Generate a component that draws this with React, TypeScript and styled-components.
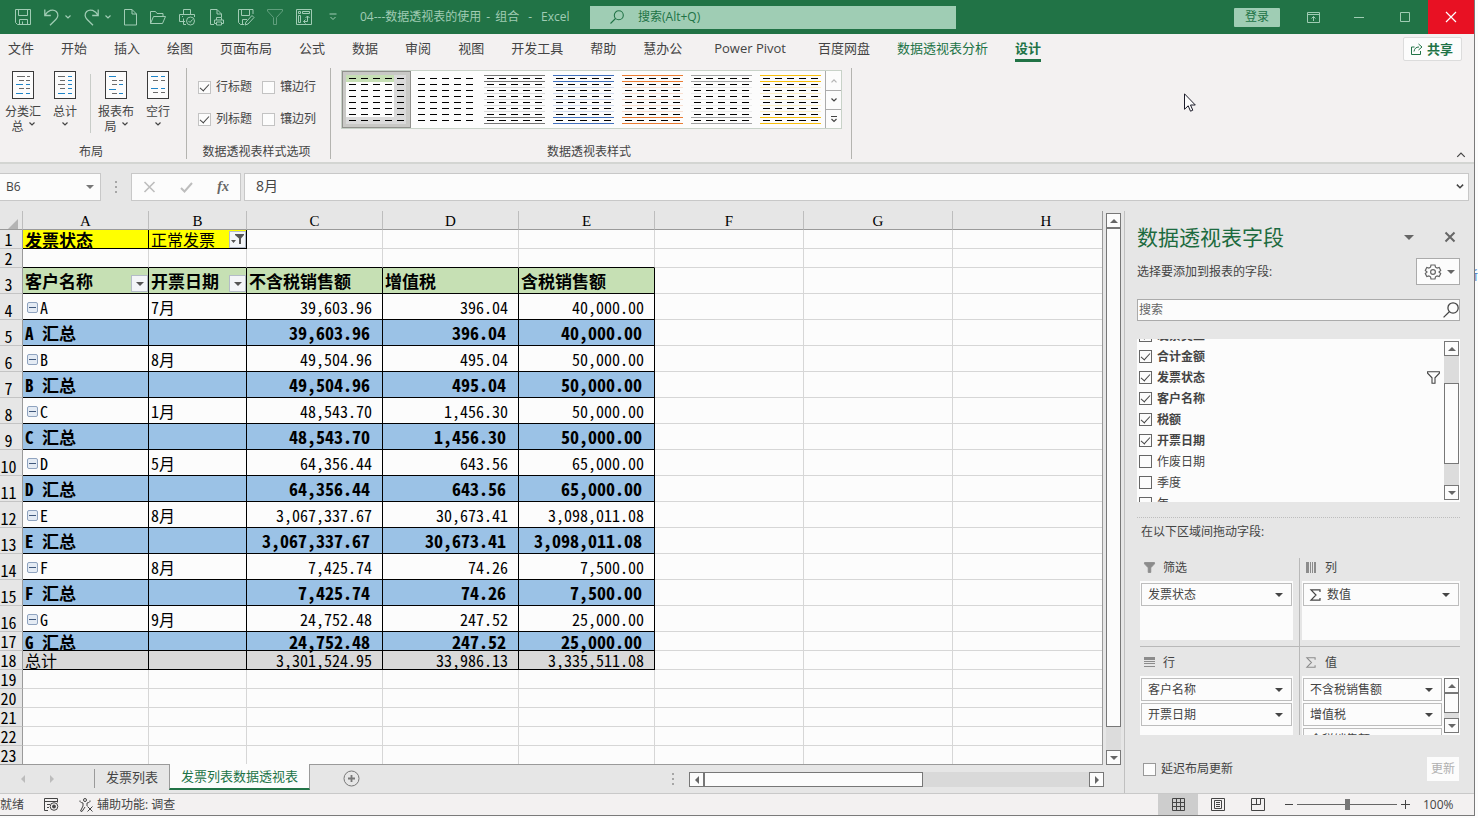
import React from "react";
import styled, { createGlobalStyle, css } from "styled-components";

const green = "#217346";
const ui = `"Open Sans", "Noto Sans CJK SC", sans-serif`;
const cellFont = `"Noto Sans CJK SC", sans-serif`;

const Global = createGlobalStyle`
  * { box-sizing: border-box; }
  body { margin: 0; background: #fcfcfc; font: 12px/16px ${ui}; color: #444; }
  button, input { font: inherit; color: inherit; margin: 0; padding: 0; border: 0; background: none; border-radius: 0; }
  button { cursor: default; white-space: nowrap; }
  input:focus, button:focus { outline: none; }
  svg { display: block; flex: none; }
`;

const Desktop = styled.div`
  display: flex;
  min-height: 100vh;
  align-items: flex-start;
  overflow: hidden;
`;
const Behind = styled.div`
  width: 3px;
  padding-top: 268px;
  overflow: hidden;
  color: #2f6fc4;
  direction: rtl;
`;
const Window = styled.div`
  flex: 1;
  min-width: 0;
  display: flex;
  flex-direction: column;
  border-right: 1px solid #7a7a7a;
  border-bottom: 1px solid #7a7a7a;
  background: #e6e6e6;
`;
const Icon = styled.svg`
  fill: none;
  stroke: currentColor;
  overflow: visible;
`;
const Muted = styled.span`
  width: 11px;
  color: #8c8c8c;
`;

/* title bar */
const TitleBar = styled.header`
  display: flex;
  align-items: center;
  height: 34px;
  background: ${green};
  color: #a0ccb4;
`;
const Quick = styled.div`
  display: flex;
  align-items: center;
  gap: 13px;
  padding-left: 15px;
  width: 360px;
`;
const QuickButton = styled.button<{ $w?: number; $dim?: boolean }>`
  display: flex;
  align-items: center;
  justify-content: space-between;
  width: ${(p) => p.$w ?? 16}px;
  opacity: ${(p) => (p.$dim ? 0.5 : 1)};
`;
const DocTitle = styled.div`
  display: flex;
  gap: 5px;
  width: 230px;
  white-space: nowrap;
`;
const AppDash = styled.span`
  margin: 0 4px;
`;
const TitleSearch = styled.label`
  display: flex;
  align-items: center;
  gap: 14px;
  width: 366px;
  height: 23px;
  padding-left: 20px;
  background: #9fcdb4;
  color: ${green};
  input { flex: 1; min-width: 0; }
  input::placeholder { color: ${green}; opacity: 1; }
`;
const WindowControls = styled.div`
  display: flex;
  align-items: center;
  align-self: stretch;
  margin-left: auto;
`;
const SignIn = styled.button`
  width: 46px;
  height: 19px;
  margin-right: 10px;
  background: #9fcdb4;
  color: ${green};
  border-radius: 1px;
`;
const ControlButton = styled.button<{ $close?: boolean }>`
  display: grid;
  place-items: center;
  align-self: stretch;
  width: 46px;
  ${(p) => p.$close && css`background: #e81123; color: #fff;`}
`;

/* ribbon */
const Tabs = styled.nav`
  display: flex;
  align-items: flex-start;
  gap: 27px;
  height: 32px;
  padding: 3px 12px 0 8px;
  background: #f3f1f1;
  font-size: 13px;
  line-height: 22px;
`;
const Tab = styled.button<{ $green?: boolean; $active?: boolean; $wide?: boolean }>`
  height: 25px;
  padding: ${(p) => (p.$wide ? "0 5px" : "0")};
  color: ${(p) => (p.$green || p.$active ? green : "#444")};
  font-weight: ${(p) => (p.$active ? 700 : 400)};
  border-bottom: 3px solid ${(p) => (p.$active ? green : "transparent")};
`;
const Share = styled.button`
  display: flex;
  align-items: center;
  gap: 4px;
  height: 24px;
  margin-left: auto;
  padding: 0 8px 0 7px;
  background: #fcfcfc;
  border: 1px solid #dcdcdc;
  border-radius: 2px;
  color: ${green};
  font-weight: 700;
  line-height: 18px;
`;
const Ribbon = styled.section`
  display: flex;
  align-items: flex-start;
  height: 98px;
  padding-top: 2px;
  background: #f3f1f1;
  border-bottom: 2px solid #d3d5d2;
`;
const Group = styled.div<{ $w: number }>`
  display: flex;
  flex-direction: column;
  justify-content: space-between;
  width: ${(p) => p.$w}px;
  height: 91px;
  border-right: 1px solid #b4b4b0;
`;
const Caption = styled.div`
  text-align: center;
  line-height: 14px;
  padding-right: 4px;
`;
const BigButtons = styled.div`
  display: flex;
  padding: 3px 0 0 2px;
`;
const BigButton = styled.button`
  display: flex;
  flex-direction: column;
  align-items: center;
  width: 42px;
  line-height: 15px;
  svg:first-child { margin-bottom: 5px; }
`;
const BigLine = styled.span`
  display: flex;
  align-items: center;
  gap: 5px;
  height: 15px;
`;
const Divider = styled.div`
  width: 1px;
  height: 59px;
  margin: 3px 4px 0;
  background: #c8ccc8;
`;
const Checks = styled.div`
  display: grid;
  grid-template-columns: 64px 64px;
  row-gap: 16px;
  padding: 11px 0 0 11px;
`;
const Check = styled.label<{ $bold?: boolean }>`
  display: flex;
  align-items: center;
  gap: 5px;
  white-space: nowrap;
  font-weight: ${(p) => (p.$bold ? 700 : 400)};
`;
const Box = styled.input<{ $line?: string }>`
  appearance: none;
  display: grid;
  place-items: center;
  width: 13px;
  height: 13px;
  flex: none;
  background: #fcfcfc;
  border: 1px solid ${(p) => p.$line ?? "#c3c3c3"};
  &:checked::after {
    content: "";
    width: 4px;
    height: 8px;
    margin-top: -2px;
    border: solid #444;
    border-width: 0 1px 1px 0;
    transform: rotate(42deg);
  }
`;
const Gallery = styled.div`
  display: flex;
  height: 59px;
  margin: 2px 9px 0 10px;
  background: #fcfcfc;
  border: 1px solid #c8d2c8;
`;
const StyleButton = styled.button<{ $on?: boolean }>`
  width: 69px;
  height: 57px;
  ${(p) => p.$on && css`background: #c9c9c6; box-shadow: inset 0 0 0 1px #90908c;`}
`;
const GalleryScroll = styled.div`
  display: grid;
  flex: 1;
  grid-template-rows: 20px 19px 18px;
  button { display: grid; place-items: center; border: 1px solid #ababab; border-width: 0 0 1px 1px; }
  button:disabled { color: #b4b4b4; }
  button:last-child { border-bottom: 0; }
`;
const Collapse = styled.button`
  margin: 84px 8px 0 auto;
`;

/* formula bar */
const FormulaBar = styled.section`
  display: flex;
  align-items: flex-start;
  height: 47px;
  padding: 9px 5px 0 0;
`;
const Field = styled.div<{ $w?: number }>`
  display: flex;
  align-items: center;
  height: 28px;
  ${(p) => (p.$w ? `width: ${p.$w}px;` : "flex: 1; min-width: 0;")}
  background: #fcfcfc;
  border: 1px solid #c8c8c8;
  input { flex: 1; min-width: 0; }
`;
const NameField = styled(Field)`
  border-left: 0;
  padding: 0 6px;
  button { color: #777; }
`;
const FormulaButtons = styled(Field)`
  justify-content: space-between;
  padding: 0 11px;
  margin-right: 3px;
`;
const FunctionButton = styled.button`
  font: italic 700 14px "Liberation Serif", serif;
  color: #666;
`;
const FormulaField = styled(Field)`
  padding: 0 4px 2px 11px;
  font-size: 14px;
`;
const Grip = styled.div<{ $w: number }>`
  display: grid;
  place-items: center;
  width: ${(p) => p.$w}px;
  height: 28px;
  color: #a6a6a6;
`;

/* worksheet */
const Body = styled.main`
  display: flex;
  min-height: 582px;
`;
const SheetSide = styled.section`
  flex: 1;
  min-width: 0;
  display: flex;
  flex-direction: column;
`;
const SheetRow = styled.div`
  display: flex;
  height: 554px;
`;
const GridWrap = styled.div`
  flex: 1;
  min-width: 0;
  overflow: hidden;
  border-right: 1px solid #9a9a9a;
  border-bottom: 1px solid #9a9a9a;
`;
/* the last column runs on past the right edge of the view */
const Grid = styled.table`
  width: calc(100% + 38px);
  table-layout: fixed;
  border-collapse: separate;
  border-spacing: 0;
  background: #fcfcfc;
  color: #000;
  font: 16px/18px ${cellFont};
  font-feature-settings: "hwid" 1;
`;
const ColHead = styled.th`
  height: 19px;
  padding: 0;
  background: #e6e6e6;
  border-right: 1px solid #bdbdbd;
  border-bottom: 1px solid #9a9a9a;
  font-family: "Liberation Serif", serif;
  font-weight: 400;
  font-size: 15px;
  line-height: 16px;
  vertical-align: bottom;
`;
const Corner = styled.svg`
  margin-left: 8px;
`;
const RowHead = styled.th`
  vertical-align: bottom;
  background: #e6e6e6;
  font-weight: 400;
  padding: 0 5px 0 0;
  border-right: 1px solid #9a9a9a;
  border-bottom: 1px solid #c4c4c4;
`;
const Row = styled.tr<{ $h: number }>`
  height: ${(p) => p.$h}px;
`;
const Cell = styled.td<{ $bg?: string; $line?: boolean; $under?: boolean; $bold?: boolean; $num?: boolean }>`
  padding: ${(p) => (p.$num ? (p.$bold ? "0 12px 0 0" : "0 10px 0 0") : "0 0 0 2px")};
  background: ${(p) => p.$bg ?? "transparent"};
  border-right: 1px solid ${(p) => (p.$line ? "#000" : "#d6d6d6")};
  border-bottom: 1px solid ${(p) => (p.$line || p.$under ? "#000" : "#d6d6d6")};
  font-weight: ${(p) => (p.$bold ? 700 : 400)};
  font-size: ${(p) => (p.$bold ? (p.$num ? 18 : 17) : 16)}px;
  line-height: ${(p) => (p.$bold ? 17 : 18)}px;
  text-align: ${(p) => (p.$num ? "right" : "left")};
  white-space: nowrap;
`;
const CellFlex = styled.div<{ $end?: boolean }>`
  display: flex;
  align-items: center;
  justify-content: ${(p) => (p.$end ? "space-between" : "flex-start")};
  height: 18px;
`;
const FilterButton = styled.button<{ $low?: boolean }>`
  display: grid;
  place-items: center;
  width: 17px;
  height: 17px;
  margin-top: ${(p) => (p.$low ? 6 : 0)}px;
  background: #f3f5f8;
  border: 1px solid #b4bcc8;
  color: #555;
`;
const Toggle = styled.button`
  display: grid;
  place-items: center;
  width: 11px;
  height: 11px;
  margin: 2px 2px 0;
  background: #e4ebf4;
  border: 1px solid #8fa3bf;
  border-radius: 2px;
  color: #40587c;
`;

/* scroll bars */
const VScroll = styled.div<{ $m?: string }>`
  display: flex;
  flex-direction: column;
  width: 15px;
  margin: ${(p) => p.$m ?? "0"};
  background: #dcdcdc;
`;
const ScrollButton = styled.button`
  display: grid;
  place-items: center;
  width: 15px;
  height: 15px;
  flex: none;
  background: #fcfcfc;
  border: 1px solid #777;
  color: #666;
`;
const Thumb = styled.div<{ $h?: number; $w?: number; $top?: number }>`
  ${(p) => p.$h && `height: ${p.$h}px;`}
  ${(p) => p.$w && `width: ${p.$w}px;`}
  margin-top: ${(p) => p.$top ?? 0}px;
  background: #fcfcfc;
  border: 1px solid #777;
`;
const Spacer = styled.div`
  flex: 1;
`;
const SheetTabs = styled.div`
  display: flex;
  align-items: flex-start;
  height: 28px;
  padding-right: 20px;
  font-size: 13px;
`;
const TabArrows = styled.div`
  display: flex;
  gap: 25px;
  width: 95px;
  height: 19px;
  margin-top: 4px;
  padding: 6px 0 0 21px;
  border-right: 1px solid #9a9a9a;
  color: #bcbcbc;
`;
const SheetTab = styled.button<{ $active?: boolean }>`
  height: 24px;
  padding: 0 11px;
  ${(p) =>
    p.$active &&
    css`
      margin-top: -1px;
      height: 26px;
      background: #fcfcfc;
      color: ${green};
      border: solid #9a9a9a;
      border-width: 0 1px;
      border-bottom: 2px solid ${green};
    `}
`;
const AddSheet = styled.button`
  margin: 5px 0 0 33px;
`;
const HScroll = styled.div`
  display: flex;
  width: 415px;
  height: 15px;
  margin-top: 7px;
  background: #d9d9d9;
`;

/* field pane */
const Pane = styled.aside`
  width: 350px;
  flex: none;
  display: flex;
  flex-direction: column;
  border-left: 1px solid #c0c0c0;
  padding: 10px 14px 0 12px;
`;
const PaneHead = styled.div`
  display: flex;
  align-items: center;
  height: 32px;
  color: #666;
`;
const PaneTitle = styled.h2`
  flex: 1;
  margin: 0;
  font-size: 21px;
  font-weight: 400;
  line-height: 32px;
  color: #1d6b3f;
`;
const CloseButton = styled.button`
  margin: 0 5px 0 31px;
`;
const PaneSub = styled.div`
  display: flex;
  align-items: center;
  justify-content: space-between;
  height: 27px;
  margin-top: 5px;
`;
const Gear = styled.button`
  display: flex;
  align-items: center;
  justify-content: space-between;
  width: 44px;
  height: 27px;
  padding: 0 4px 0 8px;
  background: #fcfcfc;
  border: 1px solid #ababab;
  color: #666;
`;
const PaneSearch = styled.label`
  display: flex;
  align-items: center;
  height: 22px;
  margin: 14px 0 18px;
  padding-left: 1px;
  background: #fcfcfc;
  border: 1px solid #ababab;
  input { flex: 1; min-width: 0; }
  input::placeholder { color: #666; opacity: 1; }
`;
const FieldList = styled.div`
  display: flex;
  height: 163px;
  background: #fcfcfc;
  overflow: hidden;
`;
const Fields = styled.div`
  flex: 1;
  margin-top: -14px;
  padding-left: 2px;
`;
const FieldRow = styled.div`
  display: flex;
  align-items: center;
  justify-content: space-between;
  height: 21px;
  padding-right: 4px;
`;
const Hint = styled.div`
  margin-top: 15px;
  padding: 6px 0 0 4px;
  border-top: 1px dotted #bdbdbd;
`;
const Areas = styled.div`
  display: grid;
  grid-template-columns: 160px 1fr;
  margin: 18px 0 0 3px;
`;
const Area = styled.div<{ $right?: boolean; $top?: boolean }>`
  padding: ${(p) => (p.$top ? "0 0 6px" : "6px 0 0")};
  ${(p) => (p.$right ? "padding-left: 2px;" : "padding-right: 6px; border-right: 1px solid #b9b9b9;")}
  ${(p) => p.$top && "border-bottom: 1px solid #b9b9b9;"}
`;
const AreaHead = styled.div`
  display: flex;
  align-items: center;
  gap: 8px;
  height: 23px;
  padding: 0 0 4px 4px;
`;
const AreaBox = styled.div`
  display: flex;
  height: 59px;
  padding: 2px 1px 0;
  background: #fcfcfc;
  overflow: hidden;
`;
const Chips = styled.div`
  flex: 1;
  display: flex;
  flex-direction: column;
  gap: 2px;
`;
const Chip = styled.button`
  display: flex;
  align-items: center;
  gap: 6px;
  height: 23px;
  flex: none;
  padding: 0 8px 0 6px;
  border: 1px solid #bdbdbd;
  svg:last-child { margin-left: auto; }
`;
const PaneFoot = styled.div`
  display: flex;
  align-items: center;
  justify-content: space-between;
  margin: 22px 1px 12px 6px;
`;
const Update = styled.button`
  width: 32px;
  height: 24px;
  background: #fcfcfc;
  color: #b0b0b0;
`;

/* status bar */
const Status = styled.footer`
  display: flex;
  align-items: center;
  height: 22px;
  background: #f3f1f1;
  border-top: 1px solid #c9c9c9;
`;
const StatusItem = styled.div`
  display: flex;
  align-items: center;
  gap: 3px;
  margin-right: 20px;
`;
const ViewButton = styled.button<{ $on?: boolean }>`
  display: grid;
  place-items: center;
  width: 40px;
  height: 21px;
  background: ${(p) => (p.$on ? "#cdcdcd" : "transparent")};
`;
const Zoom = styled.div`
  display: flex;
  align-items: center;
  gap: 4px;
  margin: 0 19px 0 7px;
  output { margin-left: 9px; width: 32px; }
`;
const Range = styled.input`
  appearance: none;
  width: 100px;
  height: 12px;
  background: linear-gradient(#666, #666) center / 100% 1px no-repeat;
  &::-webkit-slider-thumb {
    appearance: none;
    width: 5px;
    height: 11px;
    background: #777;
  }
`;
const Pointer = styled.svg`
  position: absolute;
  left: 1184px;
  top: 93px;
`;

const Chevron = ({ s = 6, up }: { s?: number; up?: boolean }) => (
  <Icon width={s} height={s / 2 + 1} viewBox="0 0 6 4" strokeWidth={s > 8 ? 0.8 : 1.2}>
    <path d={up ? "M.5 3.300 3 .8l2.500 2.500" : "M.5.500 3 3 5.500.500"} />
  </Icon>
);
const Tri = ({ dir = "down", s = 8 }: { dir?: "up" | "down" | "left" | "right"; s?: number }) => {
  const flat = dir === "up" || dir === "down";
  const d = { down: "M0 0h8L4 4z", up: "M0 4h8L4 0z", left: "M4 0v8L0 4z", right: "M0 0v8l4-4z" }[dir];
  return (
    <svg width={flat ? s : s / 2} height={flat ? s / 2 : s} viewBox={flat ? "0 0 8 4" : "0 0 4 8"} fill="currentColor">
      <path d={d} />
    </svg>
  );
};
const Q = ({ children, w = 16 }: { children: React.ReactNode; w?: number }) => (
  <Icon width={w} height="17" viewBox={`0 0 ${w} 17`} strokeWidth="1">{children}</Icon>
);
const Dots = () => (
  <svg width="2" height="12" fill="currentColor">
    <path d="M0 0h2v2H0zM0 5h2v2H0zM0 10h2v2H0z" />
  </svg>
);
const Magnifier = ({ s = 14 }: { s?: number }) => (
  <Icon width={s} height={s} viewBox="0 0 14 14" strokeWidth="1.1">
    <circle cx="8.800" cy="5.200" r="4.500" />
    <path d="M5.500 8.500.5 13.500" />
  </Icon>
);
const Funnel = ({ w = 13, solid }: { w?: number; solid?: boolean }) => (
  <Icon width={w} height={w} viewBox="0 0 13 13" strokeWidth="1.1">
    <path d="M.6.7h11.800v1.500L8 6.800v5.500H5V6.800L.6 2.200z" fill={solid ? "currentColor" : "none"} />
  </Icon>
);
const Sigma = ({ s = 11 }: { s?: number }) => (
  <Icon width={s} height={s + 1} viewBox="0 0 11 12" strokeWidth="1.200">
    <path d="M10 3V.8H1l5 5.200-5 5.200h9V9" />
  </Icon>
);
/* page icon of the layout buttons; each row is [y, x, length, blue] */
const PageIcon = ({ rows }: { rows: [number, number, number, boolean?][] }) => (
  <Icon width="22" height="28" viewBox="0 0 22 28">
    <rect x=".5" y=".5" width="21" height="27" fill="#fcfcfc" stroke="#3a3a3a" />
    {rows.map(([y, x, w, b], i) => (
      <path key={i} d={`M${x} ${y + 0.5}h${w}`} stroke={b ? "#1e84c8" : "#6a6a6a"} />
    ))}
  </Icon>
);

const dashRows = [0, 1, 2, 3, 4, 5, 6, 7];
const Thumbnail = ({ kind, dark, light }: { kind: "pivot" | "plain" | "lined"; dark?: string; light?: string }) => (
  <svg width="69" height="57" viewBox="0 0 69 57" shapeRendering="crispEdges">
    {kind === "pivot" && (
      <>
        <path d="M4 4h60v49H4z" fill="#dadada" />
        <path d="M4 4h48v42H4z" fill="#fcfcfc" />
        <path d="M4 4h48v7H4z" fill="#c6dfb4" />
      </>
    )}
    {kind === "lined" &&
      [4, 10, 16, 22, 28, 34, 40, 46, 52].map((y) => (
        <path key={y} d={`M4 ${y}h61v1H4z`} fill={y < 12 || y > 45 ? dark : light} />
      ))}
    {dashRows.map((r) => (
      <path key={r} d={`M7 ${7 + r * 6}h7v1h-7zM19 ${7 + r * 6}h7v1h-7zM31 ${7 + r * 6}h7v1h-7zM43 ${7 + r * 6}h7v1h-7zM55 ${7 + r * 6}h7v1h-7z`} />
    ))}
  </svg>
);

const tabs = ["文件", "开始", "插入", "绘图", "页面布局", "公式", "数据", "审阅", "视图", "开发工具", "帮助", "慧办公", "Power Pivot", "百度网盘", "数据透视表分析", "设计"];
const groups: [string, string, string, string, string][] = [
  ["A", "7月", "39,603.96", "396.04", "40,000.00"],
  ["B", "8月", "49,504.96", "495.04", "50,000.00"],
  ["C", "1月", "48,543.70", "1,456.30", "50,000.00"],
  ["D", "5月", "64,356.44", "643.56", "65,000.00"],
  ["E", "8月", "3,067,337.67", "30,673.41", "3,098,011.08"],
  ["F", "8月", "7,425.74", "74.26", "7,500.00"],
  ["G", "9月", "24,752.48", "247.52", "25,000.00"],
];
const widths = [23, 126, 98, 136, 136, 136, 149, 149];
const fields: [string, boolean][] = [
  ["发票类型", true], ["合计金额", true], ["发票状态", true], ["客户名称", true],
  ["税额", true], ["开票日期", true], ["作废日期", false], ["季度", false], ["年", false],
];
const lined = [["#767676", "#dcdcdc"], ["#4270bd", "#d3dcef"], ["#ea7c33", "#f9e0d2"], ["#a3a3a3", "#ececec"], ["#f8bf0c", "#fdf0c8"]];
const Blank = ({ n }: { n: number }) => <>{Array.from({ length: n }, (_, i) => <Cell key={i} />)}</>;

const TitleArea = () => (
  <TitleBar>
    <Quick>
      <QuickButton aria-label="保存"><Q><path d="M.5.500h15v15h-13l-2-2zM3.500.500v6h9v-6M4.500 15.500v-5h8v5M7.500 12.500v3" /></Q></QuickButton>
      <QuickButton $w={27} aria-label="撤消"><Q><path d="M.8.500v6h6M1 6.300C3.500 1.500 9-.5 12.300 2.500c2.800 2.700 1.500 6-.5 8L6 16.300" strokeWidth="1.300" /></Q><Chevron /></QuickButton>
      <QuickButton $w={27} aria-label="恢复"><Q><path d="M14.200.500v6h-6M14 6.300C11.500 1.500 6-.5 2.700 2.500c-2.800 2.700-1.500 6 .5 8L9 16.300" strokeWidth="1.300" /></Q><Chevron /></QuickButton>
      <QuickButton $w={13} aria-label="新建"><Q w={13}><path d="M.5.500h7.500l4.500 4.500v11H.5zM8 .5V5h4.500" /></Q></QuickButton>
      <QuickButton aria-label="打开"><Q><path d="M.5 14.500v-12h5l1.500 2h6v3M.5 14.500l3-7h12l-3 7z" /></Q></QuickButton>
      <QuickButton $w={17} aria-label="打印预览"><Q><path d="M4.500 5.500v-5h7v5M6 12.500H.5v-7h15V8M4.500 9.500v6H7M3 7.500h1" /><circle cx="11.500" cy="12" r="4" /><path d="m9.500 12 1.500 1.500 2.500-3" /></Q></QuickButton>
      <QuickButton aria-label="快速打印"><Q><path d="M5 15.500H1.500V.500H8l4.500 4.500v3M8 .5V5h4.500M7.500 11V8.500h5V11M7 14.500H5.500V11h9v3.500H13M7.500 13h5v3h-5z" /></Q></QuickButton>
      <QuickButton aria-label="另存为"><Q><path d="M15 5V.500H.5v13l2 2H6M3.500.500v6h8v-6M4.500 15.500v-5H9M8 13l6-6.500 2 2L10 15l-3 1z" /></Q></QuickButton>
      <QuickButton $dim aria-label="筛选"><Q><path d="M.5.500h15v1.500L9.500 8.500v7h-3v-7L.5 2z" /></Q></QuickButton>
      <QuickButton aria-label="数据透视表"><Q><path d="M.5.500h15v15H.5zM2.500 2.500h2v2h-2zM6.500 2.500h7v2h-7zM2.500 6.500h2v7h-2zM11.500 7v5.500H7.500M9.500 9l2-2 2 2M9.500 10.500l-2 2 2 2" /></Q></QuickButton>
      <QuickButton aria-label="自定义"><Icon width="16" height="8" viewBox="0 0 16 8"><path d="M4.500 1h7M5.500 4 8 6.500 10.500 4" /></Icon></QuickButton>
    </Quick>
    <DocTitle><span>04---数据透视表的使用</span><span>-</span><span>组合</span><AppDash>-</AppDash><span>Excel</span></DocTitle>
    <TitleSearch><Magnifier /><input placeholder="搜索(Alt+Q)" aria-label="搜索" /></TitleSearch>
    <WindowControls>
      <SignIn>登录</SignIn>
      <ControlButton aria-label="功能区显示选项"><Icon width="13" height="11" viewBox="0 0 13 11"><path d="M.5.500h12v10H.5zM.5 2.500h12M6.500 9V4.500M4.500 6.500l2-2 2 2" /></Icon></ControlButton>
      <ControlButton aria-label="最小化"><Icon width="10" height="1" viewBox="0 0 10 1"><path d="M0 .5h10" /></Icon></ControlButton>
      <ControlButton aria-label="最大化"><Icon width="10" height="10" viewBox="0 0 10 10"><path d="M.5.500h9v9h-9z" /></Icon></ControlButton>
      <ControlButton $close aria-label="关闭"><Icon width="10" height="10" viewBox="0 0 10 10"><path d="m0 0 10 10M10 0 0 10" strokeWidth="1.200" /></Icon></ControlButton>
    </WindowControls>
  </TitleBar>
);

const RibbonArea = () => (
  <>
    <Tabs>
      {tabs.map((t) => (
        <Tab key={t} $wide={t === "Power Pivot"} $green={t === "数据透视表分析"} $active={t === "设计"}>{t}</Tab>
      ))}
      <Share>
        <Icon width="12" height="12" viewBox="0 0 12 12"><path d="M3.500 4H.5v7.500h9V8M3 8.500c.5-3 2-4.500 5-4.500M7.500 1 11 4 7.500 7" /></Icon>
        共享
      </Share>
    </Tabs>
    <Ribbon>
      <Group $w={187}>
        <BigButtons>
          <BigButton>
            <PageIcon rows={[[5, 5, 8], [5, 15, 3], [9, 7, 5], [9, 14, 4], [13, 4, 7, true], [13, 14, 4, true], [17, 7, 5], [17, 14, 4], [22, 4, 7, true], [22, 14, 4, true]]} />
            <span>分类汇</span><BigLine>总<Chevron /></BigLine>
          </BigButton>
          <BigButton>
            <PageIcon rows={[[5, 4, 7], [5, 14, 4, true], [9, 6, 5], [9, 14, 4, true], [13, 4, 7], [13, 14, 4, true], [17, 6, 5], [17, 14, 4, true], [22, 4, 7, true], [22, 14, 4, true]]} />
            <span>总计</span><BigLine><Chevron /></BigLine>
          </BigButton>
          <Divider />
          <BigButton>
            <PageIcon rows={[[5, 4, 7, true], [9, 7, 5], [9, 14, 4], [13, 7, 5], [13, 14, 4, true], [18, 4, 7, true], [22, 7, 5], [22, 14, 4, true]]} />
            <span>报表布</span><BigLine>局<Chevron /></BigLine>
          </BigButton>
          <BigButton>
            <PageIcon rows={[[5, 4, 7, true], [5, 14, 4, true], [9, 6, 5], [9, 14, 4], [17, 4, 7, true], [17, 14, 4, true], [21, 6, 5], [21, 14, 4]]} />
            <span>空行</span><BigLine><Chevron /></BigLine>
          </BigButton>
        </BigButtons>
        <Caption>布局</Caption>
      </Group>
      <Group $w={144}>
        <Checks>
          <Check><Box type="checkbox" defaultChecked />行标题</Check>
          <Check><Box type="checkbox" />镶边行</Check>
          <Check><Box type="checkbox" defaultChecked />列标题</Check>
          <Check><Box type="checkbox" />镶边列</Check>
        </Checks>
        <Caption>数据透视表样式选项</Caption>
      </Group>
      <Group $w={521}>
        <Gallery>
          <StyleButton $on aria-label="样式 1"><Thumbnail kind="pivot" /></StyleButton>
          <StyleButton aria-label="样式 2"><Thumbnail kind="plain" /></StyleButton>
          {lined.map(([d, l], i) => (
            <StyleButton key={d} aria-label={`样式 ${i + 3}`}><Thumbnail kind="lined" dark={d} light={l} /></StyleButton>
          ))}
          <GalleryScroll>
            <button disabled aria-label="上一行"><Chevron up /></button>
            <button aria-label="下一行"><Chevron /></button>
            <button aria-label="其他"><Icon width="8" height="8" viewBox="0 0 8 8"><path d="M1 1.500h6M1.500 4 4 6.500 6.500 4" strokeWidth="1.200" /></Icon></button>
          </GalleryScroll>
        </Gallery>
        <Caption>数据透视表样式</Caption>
      </Group>
      <Collapse aria-label="折叠功能区"><Chevron s={10} up /></Collapse>
    </Ribbon>
    <FormulaBar>
      <NameField $w={101}><input defaultValue="B6" aria-label="名称框" /><button aria-label="名称列表"><Tri /></button></NameField>
      <Grip $w={30}><Dots /></Grip>
      <FormulaButtons $w={110}>
        <button aria-label="取消"><Icon width="13" height="12" viewBox="0 0 13 12" color="#bdbdbd"><path d="m1.500 1 10 10M11.500 1l-10 10" strokeWidth="1.600" /></Icon></button>
        <button aria-label="输入"><Icon width="13" height="11" viewBox="0 0 13 11" color="#bdbdbd"><path d="m1 6 3.500 3.500L12 1" strokeWidth="2" /></Icon></button>
        <FunctionButton aria-label="插入函数">fx</FunctionButton>
      </FormulaButtons>
      <FormulaField><input defaultValue="8月" aria-label="编辑栏" /><button aria-label="展开编辑栏"><Chevron s={8} /></button></FormulaField>
    </FormulaBar>
  </>
);

const Sheet = () => (
  <SheetSide>
    <SheetRow>
      <GridWrap>
        <Grid>
          <colgroup>{widths.map((w, i) => <col key={i} style={{ width: w }} />)}<col /></colgroup>
          <thead>
            <tr>
              <ColHead><Corner width="11" height="10"><path d="M10 0v10H0z" fill="#b4b4b4" /></Corner></ColHead>
              {"ABCDEFGH".split("").map((c) => <ColHead key={c}>{c}</ColHead>)}
            </tr>
          </thead>
          <tbody>
            <Row $h={19}>
              <RowHead>1</RowHead>
              <Cell $bg="#ff0" $line $bold>发票状态</Cell>
              <Cell $bg="#ff0" $line>
                <CellFlex $end>正常发票
                  <FilterButton aria-label="筛选"><svg width="13" height="12"><path d="M4 1h9v1L10 5.500V11H8V5.500L4 2zM0 7h5L2.500 10z" fill="#555" /></svg></FilterButton>
                </CellFlex>
              </Cell>
              <Blank n={6} />
            </Row>
            <Row $h={19}>
              <RowHead>2</RowHead>
              {[1, 2, 3, 4, 5].map((i) => <Cell key={i} $under />)}
              <Blank n={3} />
            </Row>
            <Row $h={26}>
              <RowHead>3</RowHead>
              {["客户名称", "开票日期", "不含税销售额", "增值税", "含税销售额"].map((h, i) => (
                <Cell key={h} $bg="#c6e0b4" $line $bold>
                  <CellFlex $end>{h}{i < 2 && <FilterButton $low aria-label="筛选"><Tri /></FilterButton>}</CellFlex>
                </Cell>
              ))}
              <Blank n={3} />
            </Row>
            {groups.map(([name, month, ...nums], g) => (
              <React.Fragment key={name}>
                <Row $h={26}>
                  <RowHead>{g * 2 + 4}</RowHead>
                  <Cell $line><CellFlex><Toggle aria-label="折叠"><Icon width="7" height="1"><path d="M0 .5h7" /></Icon></Toggle>{name}</CellFlex></Cell>
                  <Cell $line>{month}</Cell>
                  {nums.map((n, i) => <Cell key={i} $line $num>{n}</Cell>)}
                  <Blank n={3} />
                </Row>
                <Row $h={g === 6 ? 19 : 26}>
                  <RowHead>{g * 2 + 5}</RowHead>
                  <Cell $bg="#9bc2e6" $line $bold>{name} 汇总</Cell>
                  <Cell $bg="#9bc2e6" $line />
                  {nums.map((n, i) => <Cell key={i} $bg="#9bc2e6" $line $bold $num>{n}</Cell>)}
                  <Blank n={3} />
                </Row>
              </React.Fragment>
            ))}
            <Row $h={19}>
              <RowHead>18</RowHead>
              <Cell $bg="#d9d9d9" $line>总计</Cell>
              <Cell $bg="#d9d9d9" $line />
              {["3,301,524.95", "33,986.13", "3,335,511.08"].map((n) => <Cell key={n} $bg="#d9d9d9" $line $num>{n}</Cell>)}
              <Blank n={3} />
            </Row>
            {[19, 20, 21, 22, 23].map((r) => (
              <Row key={r} $h={19}><RowHead>{r}</RowHead><Blank n={8} /></Row>
            ))}
          </tbody>
        </Grid>
      </GridWrap>
      <VScroll $m="2px 3px 0 3px">
        <ScrollButton aria-label="向上"><Tri dir="up" /></ScrollButton>
        <Thumb $h={499} />
        <Spacer />
        <ScrollButton aria-label="向下"><Tri /></ScrollButton>
      </VScroll>
    </SheetRow>
    <SheetTabs>
      <TabArrows><Tri dir="left" /><Tri dir="right" /></TabArrows>
      <SheetTab>发票列表</SheetTab>
      <SheetTab $active>发票列表数据透视表</SheetTab>
      <AddSheet aria-label="新工作表"><Icon width="17" height="17" viewBox="0 0 17 17" color="#777"><circle cx="8.500" cy="8.500" r="7.500" /><path d="M8.500 5v7M5 8.500h7" strokeWidth="1.800" /></Icon></AddSheet>
      <Spacer />
      <Grip $w={32}><Dots /></Grip>
      <HScroll>
        <ScrollButton aria-label="向左"><Tri dir="left" /></ScrollButton>
        <Thumb $w={219} />
        <Spacer />
        <ScrollButton aria-label="向右"><Tri dir="right" /></ScrollButton>
      </HScroll>
    </SheetTabs>
  </SheetSide>
);

const FieldPane = () => (
  <Pane>
    <PaneHead>
      <PaneTitle>数据透视表字段</PaneTitle>
      <button aria-label="窗格选项"><Tri s={10} /></button>
      <CloseButton aria-label="关闭窗格"><Icon width="10" height="10" viewBox="0 0 10 10"><path d="m.5.500 9 9M9.500.500l-9 9" strokeWidth="2" /></Icon></CloseButton>
    </PaneHead>
    <PaneSub>
      选择要添加到报表的字段:
      <Gear aria-label="工具">
        <Icon width="16" height="16" viewBox="0 0 16 16" strokeWidth="1.200">
          <path d="M6 1h4l.5 2.200 1.600.9 2.100-.7 1.500 3L14 8l1.700 1.600-1.500 3-2.100-.7-1.600.9L10 15H6l-.5-2.200-1.600-.9-2.100.7-1.500-3L2 8 .3 6.400l1.500-3 2.100.7 1.600-.9z" />
          <circle cx="8" cy="8" r="2.400" />
        </Icon>
        <Tri />
      </Gear>
    </PaneSub>
    <PaneSearch><input placeholder="搜索" aria-label="搜索字段" /><Magnifier s={16} /></PaneSearch>
    <FieldList>
      <Fields>
        {fields.map(([f, on]) => (
          <FieldRow key={f}>
            <Check $bold={on}><Box type="checkbox" defaultChecked={on} $line="#666" />{f}</Check>
            {f === "发票状态" && <Funnel />}
          </FieldRow>
        ))}
      </Fields>
      <VScroll $m="2px 1px 2px 0">
        <ScrollButton aria-label="向上"><Tri dir="up" /></ScrollButton>
        <Thumb $h={81} $top={27} />
        <Spacer />
        <ScrollButton aria-label="向下"><Tri /></ScrollButton>
      </VScroll>
    </FieldList>
    <Hint>在以下区域间拖动字段:</Hint>
    <Areas>
      <Area $top>
        <AreaHead><Muted><Funnel w={11} solid /></Muted>筛选</AreaHead>
        <AreaBox><Chips><Chip>发票状态<Tri /></Chip></Chips></AreaBox>
      </Area>
      <Area $top $right>
        <AreaHead><svg width="11" height="11" fill="#8c8c8c"><path d="M0 0h3v11H0zM4 0h1v11H4zM6 0h1v11H6zM8 0h2v11H8z" /></svg>列</AreaHead>
        <AreaBox><Chips><Chip><Sigma />数值<Tri /></Chip></Chips></AreaBox>
      </Area>
      <Area>
        <AreaHead><svg width="11" height="11" fill="#8c8c8c"><path d="M0 0h11v3H0zM0 4h11v1H0zM0 6h11v1H0zM0 9h11v1H0z" /></svg>行</AreaHead>
        <AreaBox><Chips><Chip>客户名称<Tri /></Chip><Chip>开票日期<Tri /></Chip></Chips></AreaBox>
      </Area>
      <Area $right>
        <AreaHead><Muted><Sigma s={10} /></Muted>值</AreaHead>
        <AreaBox>
          <Chips><Chip>不含税销售额<Tri /></Chip><Chip>增值税<Tri /></Chip><Chip>含税销售额<Tri /></Chip></Chips>
          <VScroll $m="0 0 2px 2px">
            <ScrollButton aria-label="向上"><Tri dir="up" /></ScrollButton>
            <Thumb $h={20} />
            <Spacer />
            <ScrollButton aria-label="向下"><Tri /></ScrollButton>
          </VScroll>
        </AreaBox>
      </Area>
    </Areas>
    <PaneFoot><Check><Box type="checkbox" $line="#999" />延迟布局更新</Check><Update disabled>更新</Update></PaneFoot>
  </Pane>
);

const StatusBar = () => (
  <Status>
    <StatusItem>就绪</StatusItem>
    <StatusItem>
      <Icon width="15" height="13" viewBox="0 0 15 13"><path d="M4 12.500H.5V.500h13v4M.5 3.500h13M3 6.500h3M3 9.500h2" /><circle cx="10" cy="8.500" r="3.800" /><circle cx="10" cy="8.500" r="1.500" fill="currentColor" /></Icon>
    </StatusItem>
    <StatusItem>
      <Icon width="15" height="14" viewBox="0 0 15 14"><circle cx="6" cy="2" r="1.500" /><path d="M1 2.500C.5 4 2 4.500 4 5v3l-2.500 5 1.500.5L6 9M11 2.500C11.500 4 10 4.500 8 5v3M8.500 8.500l5 5M13.500 8.500l-5 5" /></Icon>
      辅助功能: 调查
    </StatusItem>
    <Spacer />
    <ViewButton $on aria-label="普通"><Icon width="13" height="13" viewBox="0 0 13 13"><path d="M.5.500h12v12H.5zM4.500.500v12M8.500.500v12M.5 4.500h12M.5 8.500h12" /></Icon></ViewButton>
    <ViewButton aria-label="页面布局"><Icon width="14" height="13" viewBox="0 0 14 13"><path d="M.5.500h13v12H.5zM3.500 2.500h7v8h-7zM5 4.500h4M5 6.500h4M5 8.500h4" /></Icon></ViewButton>
    <ViewButton aria-label="分页预览"><Icon width="14" height="13" viewBox="0 0 14 13"><path d="M.5.500h13v12H.5zM5.500.500v6M9.500.500v6M.5 6.500h9" /></Icon></ViewButton>
    <Zoom>
      <button aria-label="缩小"><Icon width="8" height="9"><path d="M0 4.500h8" /></Icon></button>
      <Range type="range" aria-label="缩放" />
      <button aria-label="放大"><Icon width="9" height="9"><path d="M0 4.500h9M4.500 0v9" /></Icon></button>
      <output>100%</output>
    </Zoom>
  </Status>
);

export default function App() {
  return (
    <Desktop>
      <Global />
      <Window>
        <TitleArea />
        <RibbonArea />
        <Body><Sheet /><FieldPane /></Body>
        <StatusBar />
      </Window>
      <Behind>新</Behind>
      <Pointer width="12" height="20" viewBox="0 0 12 20" fill="#fcfcfc" stroke="#1c1c2a">
        <path d="M.5.800v15.500L4.200 12.800l2.300 5.400 2.300-1-2.300-5.200h4.800z" />
      </Pointer>
    </Desktop>
  );
}
